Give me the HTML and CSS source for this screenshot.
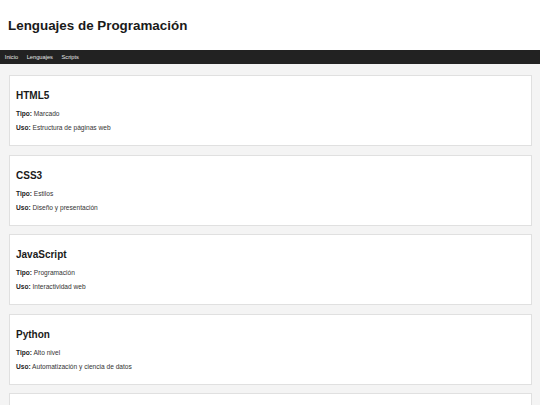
FILE: index.html
```html
<!DOCTYPE html>
<html lang="es">

<head>
    <meta charset="UTF-8">
    <meta name="viewport" content="width=device-width, initial-scale=1.0">
    <title>Lenguajes de Programación</title>
    <link rel="stylesheet" href="styles.css">
</head>

<body>
    <header class="header">
        <h1>Lenguajes de Programación</h1>
    </header>

    <nav class="nav">
        <a href="#">Inicio</a>
        <a href="#">Lenguajes</a>
        <a href="#">Scripts</a>
    </nav>

    <main class="content">
        <section class="card">
            <h2>HTML5</h2>
            <p><strong>Tipo:</strong> Marcado</p>
            <p><strong>Uso:</strong> Estructura de páginas web</p>
        </section>

        <section class="card">
            <h2>CSS3</h2>
            <p><strong>Tipo:</strong> Estilos</p>
            <p><strong>Uso:</strong> Diseño y presentación</p>
        </section>

        <section class="card">
            <h2>JavaScript</h2>
            <p><strong>Tipo:</strong> Programación</p>
            <p><strong>Uso:</strong> Interactividad web</p>
        </section>

        <section class="card">
            <h2>Python</h2>
            <p><strong>Tipo:</strong> Alto nivel</p>
            <p><strong>Uso:</strong> Automatización y ciencia de datos</p>
        </section>

        <section class="card"></section>
    </main>
</body>

</html>
```

FILE: styles.css
```css
body {
    margin: 0;
    background-color: #f4f4f4;
    font-family: 'Liberation Sans', Arial, sans-serif;
    color: #333;
}

.header {
    background-color: #fff;
    height: 50px;
    display: flex;
    align-items: center;
    padding-left: 8px;
}

.header h1 {
    margin: 0;
    font-size: 13.4px;
    color: #1a1a1a;
}

.nav {
    background-color: #222;
    height: 14px;
    display: flex;
    align-items: center;
    padding-left: 0.5px;
}

.nav a {
    color: #e6e6e6;
    text-decoration: none;
    font-size: 5.7px;
    padding: 0 4.3px;
}

.content {
    padding: 11px 8px 0 9px;
}

.card {
    background-color: #fff;
    border: 1px solid #e0e0e0;
    padding: 14px 7px 13px 6px;
    margin-bottom: 8.5px;
    min-height: 42px;
}

.card h2 {
    margin: 0 0 8px;
    font-size: 10px;
    line-height: 12px;
    color: #1a1a1a;
}

.card p {
    margin: 0 0 6px;
    font-size: 6.6px;
    line-height: 8px;
}

.card p:last-child {
    margin-bottom: 0;
}

.card strong {
    color: #222;
}
```
